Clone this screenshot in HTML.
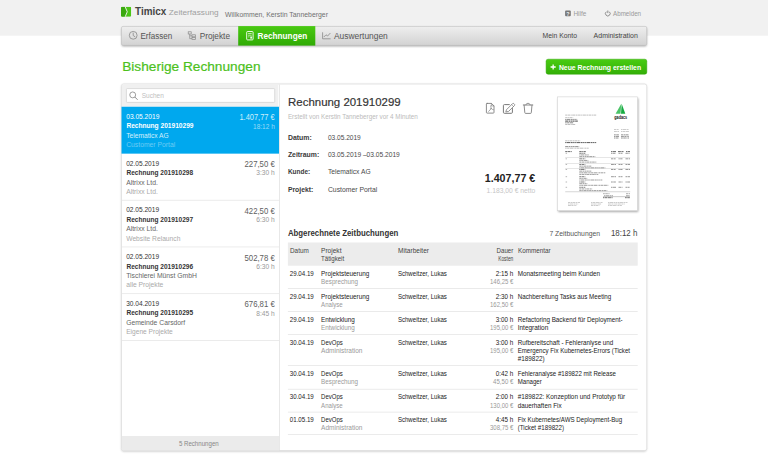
<!DOCTYPE html>
<html><head><meta charset="utf-8">
<style>
*{margin:0;padding:0}
html,body{width:768px;height:455px;overflow:hidden;background:#fff}
svg{display:block;position:absolute;left:0;top:0}
text{font-family:"Liberation Sans",sans-serif;white-space:pre}
</style></head><body>
<svg width="768" height="455" viewBox="0 0 768 455">
<defs>
<linearGradient id="gnav" x1="0" y1="0" x2="0" y2="1"><stop offset="0" stop-color="#efefef"/><stop offset="1" stop-color="#d2d2d2"/></linearGradient>
<linearGradient id="ggrn" x1="0" y1="0" x2="0" y2="1"><stop offset="0" stop-color="#49c911"/><stop offset="1" stop-color="#30ab05"/></linearGradient>
<linearGradient id="gbtn" x1="0" y1="0" x2="0" y2="1"><stop offset="0" stop-color="#49cc12"/><stop offset="1" stop-color="#33af07"/></linearGradient>
<filter id="sh" x="-5%" y="-5%" width="110%" height="115%"><feGaussianBlur stdDeviation="0.9"/></filter>
<filter id="sh2" x="-10%" y="-10%" width="120%" height="125%"><feGaussianBlur stdDeviation="1.2"/></filter>
</defs>

<rect x="0.00" y="0.00" width="768.00" height="35.70" fill="#f1f1f1"/>
<clipPath id="lg"><rect x="121" y="6.800" width="10.200" height="10" rx="1.400"/></clipPath>
<g clip-path="url(#lg)"><rect x="121" y="6.800" width="10.200" height="10" fill="#4bc516"/><path d="M121 6.800h4.100l2.100 5-2.100 5H121z" fill="#3aa80f"/><path d="M125.100 6.600l2.150 5.200-2.150 5.200" fill="none" stroke="#f1f1f1" stroke-width="0.950"/></g>
<text x="135.10" y="15.35" font-size="11.2" fill="#444" font-weight="bold" textLength="31.20" lengthAdjust="spacingAndGlyphs">Timicx</text>
<text x="168.80" y="15.35" font-size="8.1" fill="#a0a0a0" textLength="49.80" lengthAdjust="spacingAndGlyphs">Zeiterfassung</text>
<text x="224.90" y="16.60" font-size="6.9" fill="#707070" textLength="103.10" lengthAdjust="spacingAndGlyphs">Willkommen, Kerstin Tanneberger</text>
<rect x="565.100" y="10.500" width="5.700" height="5.700" rx="0.900" fill="#777"/>
<text x="567.95" y="15.50" font-size="5.4" fill="#f1f1f1" text-anchor="middle" font-weight="bold">?</text>
<text x="573.40" y="16.20" font-size="6.6" fill="#999" textLength="12.90" lengthAdjust="spacingAndGlyphs">Hilfe</text>
<g fill="none" stroke="#777" stroke-width="0.800"><path d="M606.400 11.700a2.350 2.350 0 1 0 2.800 0"/><path d="M607.800 10.500v2.600"/></g>
<text x="613.00" y="16.20" font-size="6.6" fill="#999" textLength="28.10" lengthAdjust="spacingAndGlyphs">Abmelden</text>
<rect x="121.800" y="27.400" width="524.800" height="18.800" rx="1.500" fill="#000" opacity="0.380" filter="url(#sh)"/>
<rect x="121.500" y="26.400" width="525.200" height="18.900" rx="1.500" fill="url(#gnav)" stroke="#c2c2c2" stroke-width="0.600"/>
<rect x="238.20" y="26.10" width="77.10" height="19.50" fill="url(#ggrn)"/>
<g fill="none" stroke="#888" stroke-width="0.800"><circle cx="133.200" cy="35.300" r="3.900"/><path d="M133.200 32.600v2.900l2 1.400"/></g>
<text x="140.50" y="39.20" font-size="9.6" fill="#555" textLength="31.70" lengthAdjust="spacingAndGlyphs">Erfassen</text>
<g fill="none" stroke="#888" stroke-width="0.700"><rect x="188.200" y="31.800" width="3" height="2.200"/><rect x="192" y="34.800" width="3.400" height="2"/><rect x="192" y="37.600" width="3.400" height="2"/><path d="M189.700 34v4.600h2.300M189.700 35.800h2.300"/></g>
<text x="199.70" y="39.20" font-size="9.6" fill="#555" textLength="30.30" lengthAdjust="spacingAndGlyphs">Projekte</text>
<g fill="none" stroke="#fff" stroke-width="0.900"><rect x="246.700" y="31.500" width="6.400" height="8.400" rx="0.800"/><path d="M248.100 33.500h3.600M248.100 35.200h3.600M248.100 36.900h1.400" stroke-width="0.650"/></g><rect x="250.300" y="36.500" width="1.600" height="2.100" fill="#fff"/>
<text x="257.60" y="39.20" font-size="9.6" fill="#fff" font-weight="bold" textLength="49.60" lengthAdjust="spacingAndGlyphs">Rechnungen</text>
<g fill="none" stroke="#888" stroke-width="0.800"><path d="M322.600 32.300v6.500h8"/><path d="M323.800 37l2.200-2.200 1.600 1.200 2.800-3"/></g>
<text x="334.00" y="39.20" font-size="9.6" fill="#555" textLength="53.80" lengthAdjust="spacingAndGlyphs">Auswertungen</text>
<text x="542.60" y="38.30" font-size="7.6" fill="#444" textLength="34.40" lengthAdjust="spacingAndGlyphs">Mein Konto</text>
<text x="593.60" y="38.30" font-size="7.6" fill="#444" textLength="44.20" lengthAdjust="spacingAndGlyphs">Administration</text>
<text x="122.20" y="71.00" font-size="13.6" fill="#4cc11c" textLength="138.30" lengthAdjust="spacingAndGlyphs" stroke="#4cc11c" stroke-width="0.2">Bisherige Rechnungen</text>
<rect x="546.100" y="59.200" width="100.700" height="15" rx="2" fill="url(#gbtn)" stroke="#31a309" stroke-width="0.500"/>
<path d="M550.600 67h5.100M553.150 64.450v5.100" stroke="#fff" stroke-width="1.300" fill="none"/>
<text x="558.90" y="69.50" font-size="7.2" fill="#fff" font-weight="bold" textLength="82.20" lengthAdjust="spacingAndGlyphs">Neue Rechnung erstellen</text>
<rect x="121.500" y="84.500" width="525" height="367" rx="2" fill="#000" opacity="0.220" filter="url(#sh)"/>
<rect x="121.500" y="84.100" width="525.200" height="366.500" rx="2" fill="#fff" stroke="#dcdcdc" stroke-width="0.700"/>
<rect x="121.90" y="84.50" width="156.40" height="22.30" fill="#f0f0f0"/>
<rect x="126.400" y="88.600" width="148.300" height="13.800" rx="0.800" fill="#fff" stroke="#cfcfcf" stroke-width="0.700"/>
<g fill="none" stroke="#8c8c8c" stroke-width="0.850"><circle cx="132.700" cy="94.900" r="2.950"/><path d="M134.800 97l2.800 2.800" stroke-width="1"/></g>
<text x="141.80" y="98.40" font-size="6.8" fill="#c0c0c0" textLength="22.00" lengthAdjust="spacingAndGlyphs">Suchen</text>
<rect x="279.00" y="84.50" width="0.70" height="365.90" fill="#dedede"/>
<rect x="121.50" y="106.75" width="157.50" height="46.90" fill="#00a8ee"/>
<text x="126.20" y="118.80" font-size="7.0" fill="#fff" textLength="33.20" lengthAdjust="spacingAndGlyphs">03.05.2019</text>
<text x="126.40" y="128.45" font-size="7.0" fill="#fff" font-weight="bold" textLength="67.10" lengthAdjust="spacingAndGlyphs">Rechnung 201910299</text>
<text x="126.20" y="137.80" font-size="7.0" fill="#d4effc" textLength="42.55" lengthAdjust="spacingAndGlyphs">Telematicx AG</text>
<text x="126.20" y="147.10" font-size="7.0" fill="#6ccbf4" textLength="49.05" lengthAdjust="spacingAndGlyphs">Customer Portal</text>
<text x="239.40" y="120.30" font-size="8.3" fill="#cceefb" textLength="35.35" lengthAdjust="spacingAndGlyphs">1.407,77 €</text>
<text x="253.10" y="128.60" font-size="7.0" fill="#99dbf7" textLength="21.65" lengthAdjust="spacingAndGlyphs">18:12 h</text>
<text x="126.20" y="165.55" font-size="7.0" fill="#333" textLength="32.90" lengthAdjust="spacingAndGlyphs">02.05.2019</text>
<text x="126.40" y="175.20" font-size="7.0" fill="#333" font-weight="bold" textLength="66.70" lengthAdjust="spacingAndGlyphs">Rechnung 201910298</text>
<text x="126.20" y="184.55" font-size="7.0" fill="#666" textLength="31.70" lengthAdjust="spacingAndGlyphs">Altrixx Ltd.</text>
<text x="126.20" y="193.85" font-size="7.0" fill="#aaa" textLength="31.70" lengthAdjust="spacingAndGlyphs">Altrixx Ltd.</text>
<text x="244.50" y="167.05" font-size="8.3" fill="#606060" textLength="30.25" lengthAdjust="spacingAndGlyphs">227,50 €</text>
<text x="256.30" y="175.35" font-size="7.0" fill="#999" textLength="18.45" lengthAdjust="spacingAndGlyphs">3:30 h</text>
<rect x="121.90" y="199.85" width="157.10" height="0.70" fill="#e3e3e3"/>
<text x="126.20" y="212.30" font-size="7.0" fill="#333" textLength="32.90" lengthAdjust="spacingAndGlyphs">02.05.2019</text>
<text x="126.40" y="221.95" font-size="7.0" fill="#333" font-weight="bold" textLength="66.70" lengthAdjust="spacingAndGlyphs">Rechnung 201910297</text>
<text x="126.20" y="231.30" font-size="7.0" fill="#666" textLength="31.70" lengthAdjust="spacingAndGlyphs">Altrixx Ltd.</text>
<text x="126.20" y="240.60" font-size="7.0" fill="#aaa" textLength="54.20" lengthAdjust="spacingAndGlyphs">Website Relaunch</text>
<text x="244.50" y="213.80" font-size="8.3" fill="#606060" textLength="30.25" lengthAdjust="spacingAndGlyphs">422,50 €</text>
<text x="256.30" y="222.10" font-size="7.0" fill="#999" textLength="18.45" lengthAdjust="spacingAndGlyphs">6:30 h</text>
<rect x="121.90" y="246.60" width="157.10" height="0.70" fill="#e3e3e3"/>
<text x="126.20" y="259.05" font-size="7.0" fill="#333" textLength="32.90" lengthAdjust="spacingAndGlyphs">02.05.2019</text>
<text x="126.40" y="268.70" font-size="7.0" fill="#333" font-weight="bold" textLength="66.70" lengthAdjust="spacingAndGlyphs">Rechnung 201910296</text>
<text x="126.20" y="278.05" font-size="7.0" fill="#666" textLength="70.70" lengthAdjust="spacingAndGlyphs">Tischlerei Münst GmbH</text>
<text x="126.20" y="287.35" font-size="7.0" fill="#aaa" textLength="37.20" lengthAdjust="spacingAndGlyphs">alle Projekte</text>
<text x="244.50" y="260.55" font-size="8.3" fill="#606060" textLength="30.25" lengthAdjust="spacingAndGlyphs">502,78 €</text>
<text x="256.30" y="268.85" font-size="7.0" fill="#999" textLength="18.45" lengthAdjust="spacingAndGlyphs">6:30 h</text>
<rect x="121.90" y="293.35" width="157.10" height="0.70" fill="#e3e3e3"/>
<text x="126.20" y="305.80" font-size="7.0" fill="#333" textLength="32.90" lengthAdjust="spacingAndGlyphs">30.04.2019</text>
<text x="126.40" y="315.45" font-size="7.0" fill="#333" font-weight="bold" textLength="66.70" lengthAdjust="spacingAndGlyphs">Rechnung 201910295</text>
<text x="126.20" y="324.80" font-size="7.0" fill="#666" textLength="59.00" lengthAdjust="spacingAndGlyphs">Gemeinde Carsdorf</text>
<text x="126.20" y="334.10" font-size="7.0" fill="#aaa" textLength="46.60" lengthAdjust="spacingAndGlyphs">Eigene Projekte</text>
<text x="244.50" y="307.30" font-size="8.3" fill="#606060" textLength="30.25" lengthAdjust="spacingAndGlyphs">676,81 €</text>
<text x="256.30" y="315.60" font-size="7.0" fill="#999" textLength="18.45" lengthAdjust="spacingAndGlyphs">8:45 h</text>
<rect x="121.90" y="340.10" width="157.10" height="0.70" fill="#e3e3e3"/>
<rect x="121.90" y="436.00" width="157.10" height="14.30" fill="#ebebeb"/>
<text x="178.90" y="445.50" font-size="6.8" fill="#888" textLength="39.80" lengthAdjust="spacingAndGlyphs">5 Rechnungen</text>
<text x="288.10" y="105.80" font-size="11.6" fill="#333" textLength="112.50" lengthAdjust="spacingAndGlyphs" stroke="#333" stroke-width="0.18">Rechnung 201910299</text>
<text x="287.90" y="118.70" font-size="6.4" fill="#bbb" textLength="130.00" lengthAdjust="spacingAndGlyphs">Erstellt von Kerstin Tanneberger vor 4 Minuten</text>
<text x="287.90" y="139.75" font-size="6.9" fill="#3a3a3a" font-weight="bold" textLength="23.80" lengthAdjust="spacingAndGlyphs">Datum:</text>
<text x="327.90" y="139.75" font-size="6.9" fill="#4a4a4a" textLength="32.90" lengthAdjust="spacingAndGlyphs">03.05.2019</text>
<text x="287.90" y="157.07" font-size="6.9" fill="#3a3a3a" font-weight="bold" textLength="31.30" lengthAdjust="spacingAndGlyphs">Zeitraum:</text>
<text x="327.90" y="157.07" font-size="6.9" fill="#4a4a4a" textLength="71.90" lengthAdjust="spacingAndGlyphs">03.05.2019 –03.05.2019</text>
<text x="287.90" y="174.39" font-size="6.9" fill="#3a3a3a" font-weight="bold" textLength="22.30" lengthAdjust="spacingAndGlyphs">Kunde:</text>
<text x="327.90" y="174.39" font-size="6.9" fill="#4a4a4a" textLength="42.70" lengthAdjust="spacingAndGlyphs">Telematicx AG</text>
<text x="287.90" y="191.71" font-size="6.9" fill="#3a3a3a" font-weight="bold" textLength="25.40" lengthAdjust="spacingAndGlyphs">Projekt:</text>
<text x="327.90" y="191.71" font-size="6.9" fill="#4a4a4a" textLength="49.40" lengthAdjust="spacingAndGlyphs">Customer Portal</text>
<text x="484.75" y="181.80" font-size="10.6" fill="#222" font-weight="bold" textLength="50.50" lengthAdjust="spacingAndGlyphs">1.407,77 €</text>
<text x="486.60" y="192.75" font-size="6.9" fill="#c6c6c6" textLength="48.65" lengthAdjust="spacingAndGlyphs">1.183,00 € netto</text>
<g fill="none" stroke="#787878" stroke-width="0.850" stroke-linejoin="round" stroke-linecap="round">
<path d="M487.100 103.400h4.300l2.600 2.500v6.500a.7.700 0 0 1-.7.700h-6.200a.7.700 0 0 1-.7-.7v-8.300a.7.700 0 0 1 .7-.7z"/><path d="M491.400 103.500v2.400h2.500" stroke-width="0.600"/>
<path d="M490.700 105.900c.3 1 .4 1.700.4 2.500M491.100 108.400c-.6 1.300-1.400 2.300-2.500 3M491.100 108.400c.6.800 1.300 1.200 2.200 1.300" stroke-width="0.650"/>
<path d="M509.300 104.600h-4.900a1 1 0 0 0-1 1v6.700a1 1 0 0 0 1 1h7a1 1 0 0 0 1-1v-3.800" stroke-width="1"/>
<path d="M506.700 109.500l5.900-5.900a.9.900 0 0 1 1.200 0l.7.700a.9.900 0 0 1 0 1.200l-5.900 5.900-2.400.5z" fill="#fff" stroke-width="0.800"/><path d="M511.700 104.700l1.800 1.800" stroke-width="0.550"/>
<path d="M523.300 105h9.500M525.900 104.900c.2-1.200.9-1.500 2.100-1.500s1.900.3 2.100 1.500"/><path d="M524.100 105l.7 7.600a.8.800 0 0 0 .8.800h4.900a.8.800 0 0 0 .8-.8l.7-7.600"/>
</g>
<rect x="558.200" y="98.300" width="80" height="113.500" fill="#000" opacity="0.380" filter="url(#sh2)"/>
<rect x="557.400" y="96.900" width="80.200" height="113.800" fill="#fff" stroke="#d4d4d4" stroke-width="0.600"/>
<path d="M621.300 103.700l-5.700 10.100h4.900z" fill="#4cc468"/><path d="M621.700 103.700l3.600 10.100h-4.300z" fill="#16ab42"/>
<text x="614.30" y="119.00" font-size="4.5" fill="#111" font-weight="bold" textLength="12.90" lengthAdjust="spacingAndGlyphs">gadacs</text>
<path d="M565.2 115.10h31.0" stroke="#000" stroke-opacity="0.32" stroke-width="0.8" stroke-dasharray="1.8 0.45 2.6 0.5 1.2 0.45 3.1 0.5" fill="none"/>
<path d="M565.2 117.60h8.0" stroke="#000" stroke-opacity="0.29" stroke-width="0.8" stroke-dasharray="2.4 0.5 1.1 0.4 2.9 0.5 1.6 0.45" fill="none"/>
<path d="M565.2 119.40h12.0" stroke="#000" stroke-opacity="0.58" stroke-width="0.8" stroke-dasharray="1.3 0.4 3.3 0.5 2.0 0.45 1.5 0.5" fill="none"/>
<path d="M565.2 121.10h12.6" stroke="#000" stroke-opacity="0.72" stroke-width="1.0" stroke-dasharray="2.9 0.5 1.7 0.45 1.2 0.4 2.3 0.5" fill="none"/>
<path d="M565.2 122.80h8.5" stroke="#000" stroke-opacity="0.58" stroke-width="0.8" stroke-dasharray="1.5 0.45 2.1 0.5 3.4 0.5 1.0 0.4" fill="none"/>
<path d="M565.2 124.50h10.0" stroke="#000" stroke-opacity="0.32" stroke-width="0.8" stroke-dasharray="1.8 0.45 2.6 0.5 1.2 0.45 3.1 0.5" fill="none"/>
<path d="M614.0 129.50h5.0" stroke="#000" stroke-opacity="0.25" stroke-width="0.8" stroke-dasharray="2.4 0.5 1.1 0.4 2.9 0.5 1.6 0.45" fill="none"/>
<path d="M621.0 129.50h8.0" stroke="#000" stroke-opacity="0.25" stroke-width="0.8" stroke-dasharray="1.3 0.4 3.3 0.5 2.0 0.45 1.5 0.5" fill="none"/>
<path d="M614.0 131.50h5.0" stroke="#000" stroke-opacity="0.25" stroke-width="0.8" stroke-dasharray="2.9 0.5 1.7 0.45 1.2 0.4 2.3 0.5" fill="none"/>
<path d="M621.0 131.50h8.0" stroke="#000" stroke-opacity="0.25" stroke-width="0.8" stroke-dasharray="1.5 0.45 2.1 0.5 3.4 0.5 1.0 0.4" fill="none"/>
<path d="M614.0 134.80h5.0" stroke="#000" stroke-opacity="0.5" stroke-width="0.8" stroke-dasharray="1.8 0.45 2.6 0.5 1.2 0.45 3.1 0.5" fill="none"/>
<path d="M621.0 134.80h8.0" stroke="#000" stroke-opacity="0.5" stroke-width="0.8" stroke-dasharray="2.4 0.5 1.1 0.4 2.9 0.5 1.6 0.45" fill="none"/>
<path d="M614.0 136.40h5.0" stroke="#000" stroke-opacity="0.54" stroke-width="0.8" stroke-dasharray="1.3 0.4 3.3 0.5 2.0 0.45 1.5 0.5" fill="none"/>
<path d="M621.0 136.40h8.0" stroke="#000" stroke-opacity="0.54" stroke-width="0.8" stroke-dasharray="2.9 0.5 1.7 0.45 1.2 0.4 2.3 0.5" fill="none"/>
<path d="M614.0 138.00h5.0" stroke="#000" stroke-opacity="0.54" stroke-width="0.8" stroke-dasharray="1.5 0.45 2.1 0.5 3.4 0.5 1.0 0.4" fill="none"/>
<path d="M621.0 138.00h8.0" stroke="#000" stroke-opacity="0.54" stroke-width="0.8" stroke-dasharray="1.8 0.45 2.6 0.5 1.2 0.45 3.1 0.5" fill="none"/>
<path d="M565.2 140.80h15.0" stroke="#000" stroke-opacity="0.32" stroke-width="0.8" stroke-dasharray="2.4 0.5 1.1 0.4 2.9 0.5 1.6 0.45" fill="none"/>
<path d="M565.2 142.60h31.0" stroke="#000" stroke-opacity="0.65" stroke-width="1.0" stroke-dasharray="1.3 0.4 3.3 0.5 2.0 0.45 1.5 0.5" fill="none"/>
<path d="M565.2 146.60h14.0" stroke="#000" stroke-opacity="0.54" stroke-width="0.8" stroke-dasharray="2.9 0.5 1.7 0.45 1.2 0.4 2.3 0.5" fill="none"/>
<path d="M565.2 148.20h23.5" stroke="#000" stroke-opacity="0.32" stroke-width="0.8" stroke-dasharray="1.5 0.45 2.1 0.5 3.4 0.5 1.0 0.4" fill="none"/>
<path d="M565.2 151.60h7.0" stroke="#000" stroke-opacity="0.58" stroke-width="1.0" stroke-dasharray="1.8 0.45 2.6 0.5 1.2 0.45 3.1 0.5" fill="none"/>
<path d="M579.3 151.60h6.5" stroke="#000" stroke-opacity="0.58" stroke-width="1.0" stroke-dasharray="2.4 0.5 1.1 0.4 2.9 0.5 1.6 0.45" fill="none"/>
<path d="M611.0 151.60h5.0" stroke="#000" stroke-opacity="0.58" stroke-width="1.0" stroke-dasharray="1.3 0.4 3.3 0.5 2.0 0.45 1.5 0.5" fill="none"/>
<path d="M618.0 151.60h6.0" stroke="#000" stroke-opacity="0.58" stroke-width="1.0" stroke-dasharray="2.9 0.5 1.7 0.45 1.2 0.4 2.3 0.5" fill="none"/>
<path d="M626.0 151.60h4.0" stroke="#000" stroke-opacity="0.58" stroke-width="1.0" stroke-dasharray="1.5 0.45 2.1 0.5 3.4 0.5 1.0 0.4" fill="none"/>
<path d="M565.6 153.30h1.5" stroke="#000" stroke-opacity="0.36" stroke-width="0.8" stroke-dasharray="1.8 0.45 2.6 0.5 1.2 0.45 3.1 0.5" fill="none"/>
<path d="M579.3 153.30h6.0" stroke="#000" stroke-opacity="0.61" stroke-width="0.8" stroke-dasharray="2.4 0.5 1.1 0.4 2.9 0.5 1.6 0.45" fill="none"/>
<path d="M579.3 154.95h10.0" stroke="#000" stroke-opacity="0.47" stroke-width="0.8" stroke-dasharray="1.3 0.4 3.3 0.5 2.0 0.45 1.5 0.5" fill="none"/>
<path d="M579.3 156.60h16.0" stroke="#000" stroke-opacity="0.47" stroke-width="0.8" stroke-dasharray="2.9 0.5 1.7 0.45 1.2 0.4 2.3 0.5" fill="none"/>
<path d="M611.0 153.30h5.0" stroke="#000" stroke-opacity="0.5" stroke-width="0.8" stroke-dasharray="1.5 0.45 2.1 0.5 3.4 0.5 1.0 0.4" fill="none"/>
<path d="M618.5 153.30h4.0" stroke="#000" stroke-opacity="0.5" stroke-width="0.8" stroke-dasharray="1.8 0.45 2.6 0.5 1.2 0.45 3.1 0.5" fill="none"/>
<path d="M625.5 153.30h4.5" stroke="#000" stroke-opacity="0.5" stroke-width="0.8" stroke-dasharray="2.4 0.5 1.1 0.4 2.9 0.5 1.6 0.45" fill="none"/>
<path d="M565.6 158.80h1.5" stroke="#000" stroke-opacity="0.36" stroke-width="0.8" stroke-dasharray="1.3 0.4 3.3 0.5 2.0 0.45 1.5 0.5" fill="none"/>
<path d="M579.3 158.80h6.0" stroke="#000" stroke-opacity="0.61" stroke-width="0.8" stroke-dasharray="2.9 0.5 1.7 0.45 1.2 0.4 2.3 0.5" fill="none"/>
<path d="M579.3 160.45h9.0" stroke="#000" stroke-opacity="0.47" stroke-width="0.8" stroke-dasharray="1.5 0.45 2.1 0.5 3.4 0.5 1.0 0.4" fill="none"/>
<path d="M579.3 162.10h17.0" stroke="#000" stroke-opacity="0.47" stroke-width="0.8" stroke-dasharray="1.8 0.45 2.6 0.5 1.2 0.45 3.1 0.5" fill="none"/>
<path d="M611.0 158.80h5.0" stroke="#000" stroke-opacity="0.5" stroke-width="0.8" stroke-dasharray="2.4 0.5 1.1 0.4 2.9 0.5 1.6 0.45" fill="none"/>
<path d="M618.5 158.80h4.0" stroke="#000" stroke-opacity="0.5" stroke-width="0.8" stroke-dasharray="1.3 0.4 3.3 0.5 2.0 0.45 1.5 0.5" fill="none"/>
<path d="M625.5 158.80h4.5" stroke="#000" stroke-opacity="0.5" stroke-width="0.8" stroke-dasharray="2.9 0.5 1.7 0.45 1.2 0.4 2.3 0.5" fill="none"/>
<path d="M565.6 164.50h1.5" stroke="#000" stroke-opacity="0.36" stroke-width="0.8" stroke-dasharray="1.5 0.45 2.1 0.5 3.4 0.5 1.0 0.4" fill="none"/>
<path d="M579.3 164.50h6.0" stroke="#000" stroke-opacity="0.61" stroke-width="0.8" stroke-dasharray="1.8 0.45 2.6 0.5 1.2 0.45 3.1 0.5" fill="none"/>
<path d="M579.3 166.15h12.0" stroke="#000" stroke-opacity="0.47" stroke-width="0.8" stroke-dasharray="2.4 0.5 1.1 0.4 2.9 0.5 1.6 0.45" fill="none"/>
<path d="M579.3 167.80h26.0" stroke="#000" stroke-opacity="0.47" stroke-width="0.8" stroke-dasharray="1.3 0.4 3.3 0.5 2.0 0.45 1.5 0.5" fill="none"/>
<path d="M611.0 164.50h5.0" stroke="#000" stroke-opacity="0.5" stroke-width="0.8" stroke-dasharray="2.9 0.5 1.7 0.45 1.2 0.4 2.3 0.5" fill="none"/>
<path d="M618.5 164.50h4.0" stroke="#000" stroke-opacity="0.5" stroke-width="0.8" stroke-dasharray="1.5 0.45 2.1 0.5 3.4 0.5 1.0 0.4" fill="none"/>
<path d="M625.5 164.50h4.5" stroke="#000" stroke-opacity="0.5" stroke-width="0.8" stroke-dasharray="1.8 0.45 2.6 0.5 1.2 0.45 3.1 0.5" fill="none"/>
<path d="M565.6 169.50h1.5" stroke="#000" stroke-opacity="0.36" stroke-width="0.8" stroke-dasharray="2.4 0.5 1.1 0.4 2.9 0.5 1.6 0.45" fill="none"/>
<path d="M579.3 169.50h6.0" stroke="#000" stroke-opacity="0.61" stroke-width="0.8" stroke-dasharray="1.3 0.4 3.3 0.5 2.0 0.45 1.5 0.5" fill="none"/>
<path d="M579.3 171.15h12.0" stroke="#000" stroke-opacity="0.47" stroke-width="0.8" stroke-dasharray="2.9 0.5 1.7 0.45 1.2 0.4 2.3 0.5" fill="none"/>
<path d="M579.3 172.80h26.0" stroke="#000" stroke-opacity="0.47" stroke-width="0.8" stroke-dasharray="1.5 0.45 2.1 0.5 3.4 0.5 1.0 0.4" fill="none"/>
<path d="M579.3 174.45h19.0" stroke="#000" stroke-opacity="0.47" stroke-width="0.8" stroke-dasharray="1.8 0.45 2.6 0.5 1.2 0.45 3.1 0.5" fill="none"/>
<path d="M611.0 169.50h5.0" stroke="#000" stroke-opacity="0.5" stroke-width="0.8" stroke-dasharray="2.4 0.5 1.1 0.4 2.9 0.5 1.6 0.45" fill="none"/>
<path d="M618.5 169.50h4.0" stroke="#000" stroke-opacity="0.5" stroke-width="0.8" stroke-dasharray="1.3 0.4 3.3 0.5 2.0 0.45 1.5 0.5" fill="none"/>
<path d="M625.5 169.50h4.5" stroke="#000" stroke-opacity="0.5" stroke-width="0.8" stroke-dasharray="2.9 0.5 1.7 0.45 1.2 0.4 2.3 0.5" fill="none"/>
<path d="M565.6 176.70h1.5" stroke="#000" stroke-opacity="0.36" stroke-width="0.8" stroke-dasharray="1.5 0.45 2.1 0.5 3.4 0.5 1.0 0.4" fill="none"/>
<path d="M579.3 176.70h6.0" stroke="#000" stroke-opacity="0.61" stroke-width="0.8" stroke-dasharray="1.8 0.45 2.6 0.5 1.2 0.45 3.1 0.5" fill="none"/>
<path d="M579.3 178.35h8.0" stroke="#000" stroke-opacity="0.47" stroke-width="0.8" stroke-dasharray="2.4 0.5 1.1 0.4 2.9 0.5 1.6 0.45" fill="none"/>
<path d="M579.3 180.00h23.0" stroke="#000" stroke-opacity="0.47" stroke-width="0.8" stroke-dasharray="1.3 0.4 3.3 0.5 2.0 0.45 1.5 0.5" fill="none"/>
<path d="M611.0 176.70h5.0" stroke="#000" stroke-opacity="0.5" stroke-width="0.8" stroke-dasharray="2.9 0.5 1.7 0.45 1.2 0.4 2.3 0.5" fill="none"/>
<path d="M618.5 176.70h4.0" stroke="#000" stroke-opacity="0.5" stroke-width="0.8" stroke-dasharray="1.5 0.45 2.1 0.5 3.4 0.5 1.0 0.4" fill="none"/>
<path d="M625.5 176.70h4.5" stroke="#000" stroke-opacity="0.5" stroke-width="0.8" stroke-dasharray="1.8 0.45 2.6 0.5 1.2 0.45 3.1 0.5" fill="none"/>
<path d="M565.6 182.00h1.5" stroke="#000" stroke-opacity="0.36" stroke-width="0.8" stroke-dasharray="2.4 0.5 1.1 0.4 2.9 0.5 1.6 0.45" fill="none"/>
<path d="M579.3 182.00h6.0" stroke="#000" stroke-opacity="0.61" stroke-width="0.8" stroke-dasharray="1.3 0.4 3.3 0.5 2.0 0.45 1.5 0.5" fill="none"/>
<path d="M579.3 183.65h8.0" stroke="#000" stroke-opacity="0.47" stroke-width="0.8" stroke-dasharray="2.9 0.5 1.7 0.45 1.2 0.4 2.3 0.5" fill="none"/>
<path d="M579.3 185.30h29.0" stroke="#000" stroke-opacity="0.47" stroke-width="0.8" stroke-dasharray="1.5 0.45 2.1 0.5 3.4 0.5 1.0 0.4" fill="none"/>
<path d="M611.0 182.00h5.0" stroke="#000" stroke-opacity="0.5" stroke-width="0.8" stroke-dasharray="1.8 0.45 2.6 0.5 1.2 0.45 3.1 0.5" fill="none"/>
<path d="M618.5 182.00h4.0" stroke="#000" stroke-opacity="0.5" stroke-width="0.8" stroke-dasharray="2.4 0.5 1.1 0.4 2.9 0.5 1.6 0.45" fill="none"/>
<path d="M625.5 182.00h4.5" stroke="#000" stroke-opacity="0.5" stroke-width="0.8" stroke-dasharray="1.3 0.4 3.3 0.5 2.0 0.45 1.5 0.5" fill="none"/>
<path d="M565.6 187.30h1.5" stroke="#000" stroke-opacity="0.36" stroke-width="0.8" stroke-dasharray="2.9 0.5 1.7 0.45 1.2 0.4 2.3 0.5" fill="none"/>
<path d="M579.3 187.30h6.0" stroke="#000" stroke-opacity="0.61" stroke-width="0.8" stroke-dasharray="1.5 0.45 2.1 0.5 3.4 0.5 1.0 0.4" fill="none"/>
<path d="M579.3 188.95h13.0" stroke="#000" stroke-opacity="0.47" stroke-width="0.8" stroke-dasharray="1.8 0.45 2.6 0.5 1.2 0.45 3.1 0.5" fill="none"/>
<path d="M579.3 190.60h28.0" stroke="#000" stroke-opacity="0.47" stroke-width="0.8" stroke-dasharray="2.4 0.5 1.1 0.4 2.9 0.5 1.6 0.45" fill="none"/>
<path d="M611.0 187.30h5.0" stroke="#000" stroke-opacity="0.5" stroke-width="0.8" stroke-dasharray="1.3 0.4 3.3 0.5 2.0 0.45 1.5 0.5" fill="none"/>
<path d="M618.5 187.30h4.0" stroke="#000" stroke-opacity="0.5" stroke-width="0.8" stroke-dasharray="2.9 0.5 1.7 0.45 1.2 0.4 2.3 0.5" fill="none"/>
<path d="M625.5 187.30h4.5" stroke="#000" stroke-opacity="0.5" stroke-width="0.8" stroke-dasharray="1.5 0.45 2.1 0.5 3.4 0.5 1.0 0.4" fill="none"/>
<rect x="565.2" y="157.5" width="65.0" height="0.4" fill="#000" opacity="0.25"/>
<rect x="565.2" y="163.2" width="65.0" height="0.4" fill="#000" opacity="0.25"/>
<rect x="565.2" y="168.3" width="65.0" height="0.4" fill="#000" opacity="0.25"/>
<rect x="565.2" y="191.7" width="65.0" height="0.4" fill="#000" opacity="0.4"/>
<path d="M603.0 193.70h7.0" stroke="#000" stroke-opacity="0.4" stroke-width="0.8" stroke-dasharray="1.8 0.45 2.6 0.5 1.2 0.45 3.1 0.5" fill="none"/>
<path d="M626.0 193.70h4.0" stroke="#000" stroke-opacity="0.4" stroke-width="0.8" stroke-dasharray="2.4 0.5 1.1 0.4 2.9 0.5 1.6 0.45" fill="none"/>
<path d="M604.0 195.70h9.0" stroke="#000" stroke-opacity="0.43" stroke-width="0.8" stroke-dasharray="1.3 0.4 3.3 0.5 2.0 0.45 1.5 0.5" fill="none"/>
<path d="M626.0 195.70h4.0" stroke="#000" stroke-opacity="0.43" stroke-width="0.8" stroke-dasharray="2.9 0.5 1.7 0.45 1.2 0.4 2.3 0.5" fill="none"/>
<rect x="603.0" y="196.7" width="27.0" height="0.35" fill="#000" opacity="0.6"/>
<path d="M603.0 197.70h10.0" stroke="#000" stroke-opacity="0.68" stroke-width="0.8" stroke-dasharray="1.5 0.45 2.1 0.5 3.4 0.5 1.0 0.4" fill="none"/>
<path d="M625.0 197.70h5.0" stroke="#000" stroke-opacity="0.68" stroke-width="0.8" stroke-dasharray="1.8 0.45 2.6 0.5 1.2 0.45 3.1 0.5" fill="none"/>
<path d="M568.0 202.50h12.0" stroke="#000" stroke-opacity="0.25" stroke-width="0.8" stroke-dasharray="2.4 0.5 1.1 0.4 2.9 0.5 1.6 0.45" fill="none"/>
<path d="M568.0 204.00h10.2" stroke="#000" stroke-opacity="0.25" stroke-width="0.8" stroke-dasharray="1.3 0.4 3.3 0.5 2.0 0.45 1.5 0.5" fill="none"/>
<path d="M568.0 205.50h8.4" stroke="#000" stroke-opacity="0.25" stroke-width="0.8" stroke-dasharray="2.9 0.5 1.7 0.45 1.2 0.4 2.3 0.5" fill="none"/>
<path d="M591.0 202.50h12.0" stroke="#000" stroke-opacity="0.25" stroke-width="0.8" stroke-dasharray="1.5 0.45 2.1 0.5 3.4 0.5 1.0 0.4" fill="none"/>
<path d="M591.0 204.00h10.2" stroke="#000" stroke-opacity="0.25" stroke-width="0.8" stroke-dasharray="1.8 0.45 2.6 0.5 1.2 0.45 3.1 0.5" fill="none"/>
<path d="M591.0 205.50h8.4" stroke="#000" stroke-opacity="0.25" stroke-width="0.8" stroke-dasharray="2.4 0.5 1.1 0.4 2.9 0.5 1.6 0.45" fill="none"/>
<path d="M608.0 202.50h20.0" stroke="#000" stroke-opacity="0.25" stroke-width="0.8" stroke-dasharray="1.3 0.4 3.3 0.5 2.0 0.45 1.5 0.5" fill="none"/>
<path d="M608.0 204.00h17.0" stroke="#000" stroke-opacity="0.25" stroke-width="0.8" stroke-dasharray="2.9 0.5 1.7 0.45 1.2 0.4 2.3 0.5" fill="none"/>
<path d="M608.0 205.50h14.0" stroke="#000" stroke-opacity="0.25" stroke-width="0.8" stroke-dasharray="1.5 0.45 2.1 0.5 3.4 0.5 1.0 0.4" fill="none"/>
<text x="287.90" y="235.50" font-size="9" fill="#333" font-weight="bold" textLength="110.40" lengthAdjust="spacingAndGlyphs">Abgerechnete Zeitbuchungen</text>
<text x="549.40" y="235.50" font-size="6.8" fill="#555" textLength="50.60" lengthAdjust="spacingAndGlyphs">7 Zeitbuchungen</text>
<text x="610.90" y="235.50" font-size="9.2" fill="#444" textLength="26.50" lengthAdjust="spacingAndGlyphs">18:12 h</text>
<rect x="287.90" y="242.50" width="349.80" height="23.20" fill="#ececec"/>
<text x="290.00" y="252.70" font-size="6.7" fill="#444" textLength="18.75" lengthAdjust="spacingAndGlyphs">Datum</text>
<text x="321.00" y="252.70" font-size="6.7" fill="#444" textLength="20.50" lengthAdjust="spacingAndGlyphs">Projekt</text>
<text x="321.00" y="261.35" font-size="6.7" fill="#444" textLength="23.20" lengthAdjust="spacingAndGlyphs">Tätigkeit</text>
<text x="398.10" y="252.70" font-size="6.7" fill="#444" textLength="30.90" lengthAdjust="spacingAndGlyphs">Mitarbeiter</text>
<text x="496.60" y="252.70" font-size="6.7" fill="#444" textLength="16.70" lengthAdjust="spacingAndGlyphs">Dauer</text>
<text x="498.20" y="261.35" font-size="6.7" fill="#444" textLength="15.10" lengthAdjust="spacingAndGlyphs">Kosten</text>
<text x="518.00" y="252.70" font-size="6.7" fill="#444" textLength="32.70" lengthAdjust="spacingAndGlyphs">Kommentar</text>
<text x="289.80" y="275.65" font-size="6.7" fill="#222" textLength="24.00" lengthAdjust="spacingAndGlyphs">29.04.19</text>
<text x="321.10" y="275.65" font-size="6.7" fill="#222" textLength="48.30" lengthAdjust="spacingAndGlyphs">Projektsteuerung</text>
<text x="321.10" y="283.85" font-size="6.7" fill="#999" textLength="36.90" lengthAdjust="spacingAndGlyphs">Besprechung</text>
<text x="397.90" y="275.65" font-size="6.7" fill="#222" textLength="49.00" lengthAdjust="spacingAndGlyphs">Schweitzer, Lukas</text>
<text x="495.80" y="275.65" font-size="6.7" fill="#222" textLength="17.50" lengthAdjust="spacingAndGlyphs">2:15 h</text>
<text x="490.00" y="283.85" font-size="6.7" fill="#999" textLength="23.30" lengthAdjust="spacingAndGlyphs">146,25 €</text>
<text x="517.70" y="275.65" font-size="6.7" fill="#222" textLength="82.30" lengthAdjust="spacingAndGlyphs">Monatsmeeting beim Kunden</text>
<rect x="287.90" y="288.15" width="349.80" height="0.70" fill="#e2e2e2"/>
<text x="289.80" y="298.75" font-size="6.7" fill="#222" textLength="24.00" lengthAdjust="spacingAndGlyphs">29.04.19</text>
<text x="321.10" y="298.75" font-size="6.7" fill="#222" textLength="48.30" lengthAdjust="spacingAndGlyphs">Projektsteuerung</text>
<text x="321.10" y="306.95" font-size="6.7" fill="#999" textLength="21.65" lengthAdjust="spacingAndGlyphs">Analyse</text>
<text x="397.90" y="298.75" font-size="6.7" fill="#222" textLength="49.00" lengthAdjust="spacingAndGlyphs">Schweitzer, Lukas</text>
<text x="495.80" y="298.75" font-size="6.7" fill="#222" textLength="17.50" lengthAdjust="spacingAndGlyphs">2:30 h</text>
<text x="490.00" y="306.95" font-size="6.7" fill="#999" textLength="23.30" lengthAdjust="spacingAndGlyphs">162,50 €</text>
<text x="517.70" y="298.75" font-size="6.7" fill="#222" textLength="93.55" lengthAdjust="spacingAndGlyphs">Nachbereitung Tasks aus Meeting</text>
<rect x="287.90" y="311.15" width="349.80" height="0.70" fill="#e2e2e2"/>
<text x="289.80" y="321.85" font-size="6.7" fill="#222" textLength="24.00" lengthAdjust="spacingAndGlyphs">29.04.19</text>
<text x="321.10" y="321.85" font-size="6.7" fill="#222" textLength="33.70" lengthAdjust="spacingAndGlyphs">Entwicklung</text>
<text x="321.10" y="330.05" font-size="6.7" fill="#999" textLength="33.70" lengthAdjust="spacingAndGlyphs">Entwicklung</text>
<text x="397.90" y="321.85" font-size="6.7" fill="#222" textLength="49.00" lengthAdjust="spacingAndGlyphs">Schweitzer, Lukas</text>
<text x="495.80" y="321.85" font-size="6.7" fill="#222" textLength="17.50" lengthAdjust="spacingAndGlyphs">3:00 h</text>
<text x="490.00" y="330.05" font-size="6.7" fill="#999" textLength="23.30" lengthAdjust="spacingAndGlyphs">195,00 €</text>
<text x="517.70" y="321.85" font-size="6.7" fill="#222" textLength="105.00" lengthAdjust="spacingAndGlyphs">Refactoring Backend für Deployment-</text>
<text x="517.70" y="330.00" font-size="6.7" fill="#222" textLength="30.60" lengthAdjust="spacingAndGlyphs">Integration</text>
<rect x="287.90" y="334.25" width="349.80" height="0.70" fill="#e2e2e2"/>
<text x="289.80" y="344.75" font-size="6.7" fill="#222" textLength="24.00" lengthAdjust="spacingAndGlyphs">30.04.19</text>
<text x="321.10" y="344.75" font-size="6.7" fill="#222" textLength="21.65" lengthAdjust="spacingAndGlyphs">DevOps</text>
<text x="321.10" y="352.95" font-size="6.7" fill="#999" textLength="41.40" lengthAdjust="spacingAndGlyphs">Administration</text>
<text x="397.90" y="344.75" font-size="6.7" fill="#222" textLength="49.00" lengthAdjust="spacingAndGlyphs">Schweitzer, Lukas</text>
<text x="495.80" y="344.75" font-size="6.7" fill="#222" textLength="17.50" lengthAdjust="spacingAndGlyphs">3:00 h</text>
<text x="490.00" y="352.95" font-size="6.7" fill="#999" textLength="23.30" lengthAdjust="spacingAndGlyphs">195,00 €</text>
<text x="517.70" y="344.75" font-size="6.7" fill="#222" textLength="95.60" lengthAdjust="spacingAndGlyphs">Rufbereitschaft - Fehleranlyse und</text>
<text x="517.70" y="352.90" font-size="6.7" fill="#222" textLength="112.30" lengthAdjust="spacingAndGlyphs">Emergency Fix Kubernetes-Errors (Ticket</text>
<text x="517.70" y="361.05" font-size="6.7" fill="#222" textLength="26.90" lengthAdjust="spacingAndGlyphs">#189822)</text>
<rect x="287.90" y="365.25" width="349.80" height="0.70" fill="#e2e2e2"/>
<text x="289.80" y="375.95" font-size="6.7" fill="#222" textLength="24.00" lengthAdjust="spacingAndGlyphs">30.04.19</text>
<text x="321.10" y="375.95" font-size="6.7" fill="#222" textLength="21.65" lengthAdjust="spacingAndGlyphs">DevOps</text>
<text x="321.10" y="384.15" font-size="6.7" fill="#999" textLength="36.90" lengthAdjust="spacingAndGlyphs">Besprechung</text>
<text x="397.90" y="375.95" font-size="6.7" fill="#222" textLength="49.00" lengthAdjust="spacingAndGlyphs">Schweitzer, Lukas</text>
<text x="495.80" y="375.95" font-size="6.7" fill="#222" textLength="17.50" lengthAdjust="spacingAndGlyphs">0:42 h</text>
<text x="493.10" y="384.15" font-size="6.7" fill="#999" textLength="20.20" lengthAdjust="spacingAndGlyphs">45,50 €</text>
<text x="517.70" y="375.95" font-size="6.7" fill="#222" textLength="98.20" lengthAdjust="spacingAndGlyphs">Fehleranalyse #189822 mit Release</text>
<text x="517.70" y="384.10" font-size="6.7" fill="#222" textLength="24.10" lengthAdjust="spacingAndGlyphs">Manager</text>
<rect x="287.90" y="388.85" width="349.80" height="0.70" fill="#e2e2e2"/>
<text x="289.80" y="399.35" font-size="6.7" fill="#222" textLength="24.00" lengthAdjust="spacingAndGlyphs">30.04.19</text>
<text x="321.10" y="399.35" font-size="6.7" fill="#222" textLength="21.65" lengthAdjust="spacingAndGlyphs">DevOps</text>
<text x="321.10" y="407.55" font-size="6.7" fill="#999" textLength="21.65" lengthAdjust="spacingAndGlyphs">Analyse</text>
<text x="397.90" y="399.35" font-size="6.7" fill="#222" textLength="49.00" lengthAdjust="spacingAndGlyphs">Schweitzer, Lukas</text>
<text x="495.80" y="399.35" font-size="6.7" fill="#222" textLength="17.50" lengthAdjust="spacingAndGlyphs">2:00 h</text>
<text x="490.00" y="407.55" font-size="6.7" fill="#999" textLength="23.30" lengthAdjust="spacingAndGlyphs">130,00 €</text>
<text x="517.70" y="399.35" font-size="6.7" fill="#222" textLength="107.40" lengthAdjust="spacingAndGlyphs">#189822: Konzeption und Prototyp für</text>
<text x="517.70" y="407.50" font-size="6.7" fill="#222" textLength="43.90" lengthAdjust="spacingAndGlyphs">dauerhaften Fix</text>
<rect x="287.90" y="411.75" width="349.80" height="0.70" fill="#e2e2e2"/>
<text x="289.80" y="422.15" font-size="6.7" fill="#222" textLength="24.00" lengthAdjust="spacingAndGlyphs">01.05.19</text>
<text x="321.10" y="422.15" font-size="6.7" fill="#222" textLength="21.65" lengthAdjust="spacingAndGlyphs">DevOps</text>
<text x="321.10" y="430.35" font-size="6.7" fill="#999" textLength="41.40" lengthAdjust="spacingAndGlyphs">Administration</text>
<text x="397.90" y="422.15" font-size="6.7" fill="#222" textLength="49.00" lengthAdjust="spacingAndGlyphs">Schweitzer, Lukas</text>
<text x="495.80" y="422.15" font-size="6.7" fill="#222" textLength="17.50" lengthAdjust="spacingAndGlyphs">4:45 h</text>
<text x="490.00" y="430.35" font-size="6.7" fill="#999" textLength="23.30" lengthAdjust="spacingAndGlyphs">308,75 €</text>
<text x="517.70" y="422.15" font-size="6.7" fill="#222" textLength="104.50" lengthAdjust="spacingAndGlyphs">Fix Kubernetes/AWS Deployment-Bug</text>
<text x="517.70" y="430.30" font-size="6.7" fill="#222" textLength="46.40" lengthAdjust="spacingAndGlyphs">(Ticket #189822)</text>
<rect x="287.90" y="434.25" width="349.80" height="0.70" fill="#e2e2e2"/>
</svg></body></html>
